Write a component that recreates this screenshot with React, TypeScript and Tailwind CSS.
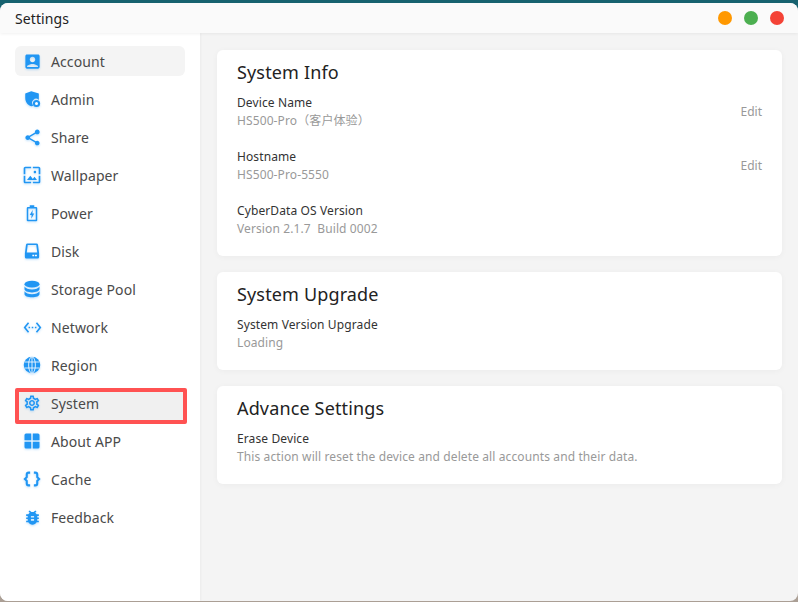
import { ReactNode } from 'react';
import {
  MdAccountBox,
  MdShare,
  MdWallpaper,
  MdSettingsEthernet,
  MdBugReport,
  MdOutlineSettings,
} from 'react-icons/md';

const Svg = ({ children }: { children: ReactNode }) => (
  <svg viewBox="0 0 24 24" className="h-[18px] w-[18px]" fill="currentColor">
    {children}
  </svg>
);

const navItems: { label: string; icon: ReactNode }[] = [
  { label: 'Account', icon: <MdAccountBox size={19} /> },
  {
    label: 'Admin',
    icon: (
      <Svg>
        <path d="M11 1.500 3 4.800v6c0 5 3.200 9.600 8 11 1-.3 1.900-.7 2.700-1.300A5 5 0 0 1 21 13.300c.1-.8.1-1.600.1-2.500v-6z" />
        <circle cx="18" cy="18" r="4.800" />
        <circle cx="18" cy="18" r="2" fill="#fff" />
      </Svg>
    ),
  },
  { label: 'Share', icon: <MdShare size={19} /> },
  { label: 'Wallpaper', icon: <MdWallpaper size={20} /> },
  {
    label: 'Power',
    icon: (
      <Svg>
        <path d="M9 1.500h6V4h2.500A1.500 1.500 0 0 1 19 5.500v16a1.500 1.500 0 0 1-1.500 1.500h-11A1.500 1.500 0 0 1 5 21.500v-16A1.500 1.500 0 0 1 6.500 4H9zM7 6v15h10V6z" fillRule="evenodd" />
        <path d="m13 7.500-4 7h2.500l-.5 5 4-7h-2.500z" />
      </Svg>
    ),
  },
  {
    label: 'Disk',
    icon: (
      <Svg>
        <path d="M6 2h12a2 2 0 0 1 2 1.800L21.500 15v5a2 2 0 0 1-2 2h-15a2 2 0 0 1-2-2v-5L4 3.800A2 2 0 0 1 6 2zm.3 2L5 14h14L17.700 4z" fillRule="evenodd" />
        <rect x="12.500" y="17" width="2.500" height="2" fill="#fff" />
        <rect x="16" y="17" width="2.500" height="2" fill="#fff" />
      </Svg>
    ),
  },
  {
    label: 'Storage Pool',
    icon: (
      <Svg>
        <ellipse cx="12" cy="5.500" rx="10" ry="4.500" />
        <path d="M2 8.500c1.500 2.600 5.500 4 10 4s8.500-1.400 10-4V12c0 2.500-4.500 4.500-10 4.500S2 14.500 2 12z" />
        <path d="M2 15c1.500 2.600 5.500 4 10 4s8.500-1.400 10-4v3.500c0 2.500-4.500 4.500-10 4.500S2 21 2 18.500z" />
      </Svg>
    ),
  },
  { label: 'Network', icon: <MdSettingsEthernet size={19} /> },
  {
    label: 'Region',
    icon: (
      <Svg>
        <circle cx="12" cy="12" r="11" />
        <g stroke="#fff" strokeWidth="1.100" fill="none">
          <ellipse cx="12" cy="12" rx="4.500" ry="11" />
          <path d="M12 1v22M2 8h20M2 16h20" />
        </g>
      </Svg>
    ),
  },
  { label: 'System', icon: <MdOutlineSettings size={18} /> },
  {
    label: 'About APP',
    icon: (
      <Svg>
        <path d="M4 2h7v9H2V4a2 2 0 0 1 2-2zM13 2h7a2 2 0 0 1 2 2v7h-9zM2 13h9v9H4a2 2 0 0 1-2-2zM13 13h9v7a2 2 0 0 1-2 2h-7z" />
      </Svg>
    ),
  },
  {
    label: 'Cache',
    icon: (
      <Svg>
        <path
          d="M9.500 3.500H7.500A2.500 2.500 0 0 0 5 6v3.500L2.500 12 5 14.500V18a2.500 2.500 0 0 0 2.500 2.500h2M14.500 3.500h2A2.500 2.500 0 0 1 19 6v3.500l2.500 2.500-2.500 2.500V18a2.500 2.500 0 0 1-2.500 2.500h-2"
          fill="none"
          stroke="currentColor"
          strokeWidth="2.800"
        />
      </Svg>
    ),
  },
  { label: 'Feedback', icon: <MdBugReport size={19} /> },
];

const InfoRow = ({ label, value, edit }: { label: string; value: string; edit?: boolean }) => (
  <div className="flex items-center justify-between">
    <div className="tracking-[0.11px]">
      <div className="h-[18px] text-xs leading-[20px] text-[#333]">{label}</div>
      <div className="h-[18px] whitespace-pre text-xs leading-[20px] text-[#999]">{value}</div>
    </div>
    {edit && <span className="pt-[2px] text-xs text-[#999]">Edit</span>}
  </div>
);

const Card = ({ title, children }: { title: string; children: ReactNode }) => (
  <section className="rounded-md bg-white pt-[10px] pr-5 pb-[19px] pl-5 shadow-[0_1px_6px_rgba(0,0,0,0.04)]">
    <h2 className="mb-[9px] h-6 text-[18px] leading-6 tracking-[0.15px] text-[#222]">{title}</h2>
    <div className="flex flex-col gap-[18px]">{children}</div>
  </section>
);

const App = () => {
  return (
    <div
      className="h-[602px] w-[798px] overflow-hidden bg-[linear-gradient(#17626f_50%,#ab9f95_50%)] pt-[3px] pb-px"
      style={{ fontFamily: '"Noto Sans", "Noto Sans CJK SC", sans-serif' }}
    >
      <div className="flex h-full flex-col overflow-hidden rounded-lg bg-[#f4f4f4]">
        <header className="relative z-10 flex h-[30px] shrink-0 items-center justify-between bg-[#fafafa] pr-[14px] pl-[15px] shadow-[0_1px_3px_rgba(0,0,0,0.06)]">
          <span className="pt-[2px] text-sm tracking-[0.1px] text-[#222]">Settings</span>
          <div className="flex gap-3">
            <span className="h-[14px] w-[14px] rounded-full bg-[#ff9800]" />
            <span className="h-[14px] w-[14px] rounded-full bg-[#4caf50]" />
            <span className="h-[14px] w-[14px] rounded-full bg-[#f44336]" />
          </div>
        </header>
        <div className="flex min-h-0 flex-1">
          <aside className="w-[200px] shrink-0 bg-white pt-[13px] pl-[15px] shadow-[1px_0_2px_rgba(0,0,0,0.04)]">
            <nav className="flex w-[170px] flex-col gap-2">
              {navItems.map(item => (
                <div
                  key={item.label}
                  className={`relative flex h-[30px] items-center gap-[9px] rounded-md pl-[7px] text-sm tracking-[0.1px] text-[#4a4a4a] ${
                    item.label === 'Account' ? 'bg-[#f4f4f4]' : ''
                  }`}
                >
                  {item.label === 'System' && (
                    <span className="absolute top-0 left-0 h-9 w-[172px] rounded-[2px] border-4 border-[#ff5252] bg-[#f0f0f0]" />
                  )}
                  <span className="relative flex w-5 justify-center text-[#2196f3] drop-shadow-[0_1px_1px_rgba(33,150,243,0.3)]">
                    {item.icon}
                  </span>
                  <span className="relative pt-[2px]">{item.label}</span>
                </div>
              ))}
            </nav>
          </aside>
          <main className="flex flex-1 flex-col gap-4 pt-[17px] pr-4 pl-[17px]">
            <Card title="System Info">
              <InfoRow label="Device Name" value="HS500-Pro（客户体验）" edit />
              <InfoRow label="Hostname" value="HS500-Pro-5550" edit />
              <InfoRow label="CyberData OS Version" value="Version 2.1.7  Build 0002" />
            </Card>
            <Card title="System Upgrade">
              <InfoRow label="System Version Upgrade" value="Loading" />
            </Card>
            <Card title="Advance Settings">
              <InfoRow label="Erase Device" value="This action will reset the device and delete all accounts and their data." />
            </Card>
          </main>
        </div>
      </div>
    </div>
  );
};

export default App;
